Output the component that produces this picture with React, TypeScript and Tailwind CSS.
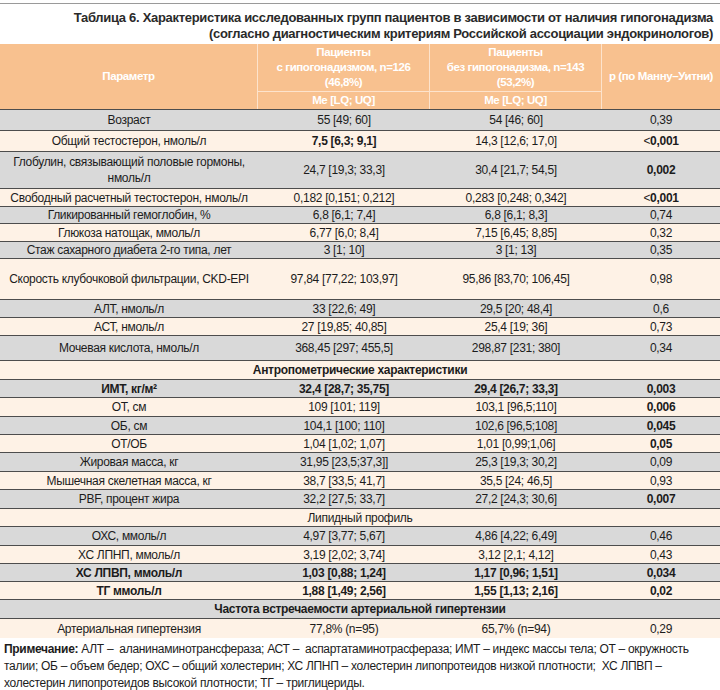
import React from 'react';

type Row = {
  label?: string;
  a?: string;
  b?: string;
  p?: string;
  h: number;
  bold?: boolean;
  aBold?: boolean;
  pBold?: boolean;
  lt?: boolean;
  section?: string;
  sectionBold?: boolean;
};

const rows: Row[] = [
  { label: 'Возраст', a: '55 [49; 60]', b: '54 [46; 60]', p: '0,39', h: 21 },
  { label: 'Общий тестостерон, нмоль/л', a: '7,5 [6,3; 9,1]', aBold: true, b: '14,3 [12,6; 17,0]', p: '0,001', pBold: true, lt: true, h: 21 },
  { label: 'Глобулин, связывающий половые гормоны,\nнмоль/л', a: '24,7 [19,3; 33,3]', b: '30,4 [21,7; 54,5]', p: '0,002', pBold: true, h: 37 },
  { label: 'Свободный расчетный тестостерон, нмоль/л', a: '0,182 [0,151; 0,212]', b: '0,283 [0,248; 0,342]', p: '0,001', pBold: true, lt: true, h: 18 },
  { label: 'Гликированный гемоглобин, %', a: '6,8 [6,1; 7,4]', b: '6,8 [6,1; 8,3]', p: '0,74', h: 17 },
  { label: 'Глюкоза натощак, ммоль/л', a: '6,77 [6,0; 8,4]', b: '7,15 [6,45; 8,85]', p: '0,32', h: 18 },
  { label: 'Стаж сахарного диабета 2-го типа, лет', a: '3 [1; 10]', b: '3 [1; 13]', p: '0,35', h: 17 },
  { label: 'Скорость клубочковой фильтрации, CKD-EPI', a: '97,84 [77,22; 103,97]', b: '95,86 [83,70; 106,45]', p: '0,98', h: 41 },
  { label: 'АЛТ, нмоль/л', a: '33 [22,6; 49]', b: '29,5 [20; 48,4]', p: '0,6', h: 18 },
  { label: 'АСТ, нмоль/л', a: '27 [19,85; 40,85]', b: '25,4 [19; 36]', p: '0,73', h: 18 },
  { label: 'Мочевая кислота, нмоль/л', a: '368,45 [297; 455,5]', b: '298,87 [231; 380]', p: '0,34', h: 25 },
  { section: 'Антропометрические характеристики', sectionBold: true, h: 19 },
  { label: 'ИМТ, кг/м²', a: '32,4 [28,7; 35,75]', b: '29,4 [26,7; 33,3]', p: '0,003', bold: true, h: 18 },
  { label: 'ОТ, см', a: '109 [101; 119]', b: '103,1 [96,5;110]', p: '0,006', pBold: true, h: 19 },
  { label: 'ОБ, см', a: '104,1 [100; 110]', b: '102,6 [96,5;108]', p: '0,045', pBold: true, h: 18 },
  { label: 'ОТ/ОБ', a: '1,04 [1,02; 1,07]', b: '1,01 [0,99;1,06]', p: '0,05', pBold: true, h: 18 },
  { label: 'Жировая масса, кг', a: '31,95 [23,5;37,3]]', b: '25,3 [19,3; 30,2]', p: '0,09', h: 19 },
  { label: 'Мышечная скелетная масса, кг', a: '38,7 [33,5; 41,7]', b: '35,5 [24; 46,5]', p: '0,93', h: 18 },
  { label: 'PBF, процент жира', a: '32,2 [27,5; 33,7]', b: '27,2 [24,3; 30,6]', p: '0,007', pBold: true, h: 19 },
  { section: 'Липидный профиль', h: 18 },
  { label: 'ОХС, ммоль/л', a: '4,97 [3,77; 5,67]', b: '4,86 [4,22; 6,49]', p: '0,46', h: 19 },
  { label: 'ХС ЛПНП, ммоль/л', a: '3,19 [2,02; 3,74]', b: '3,12 [2,1; 4,12]', p: '0,43', h: 18 },
  { label: 'ХС ЛПВП, ммоль/л', a: '1,03 [0,88; 1,24]', b: '1,17 [0,96; 1,51]', p: '0,034', bold: true, h: 18 },
  { label: 'ТГ ммоль/л', a: '1,88 [1,49; 2,56]', b: '1,55 [1,13; 2,16]', p: '0,02', bold: true, h: 18 },
  { section: 'Частота встречаемости артериальной гипертензии', sectionBold: true, h: 19 },
  { label: 'Артериальная гипертензия', a: '77,8% (n=95)', b: '65,7% (n=94)', p: '0,29', h: 19 },
];

const App: React.FC = () => {
  return (
    <div className="w-[720px] h-[690px] bg-white text-[#1c1c1c] font-['Liberation_Sans',Arial,sans-serif] overflow-hidden">
      {/* Title */}
      <div className="mt-[3px] border-t border-[#9a9a9a] pt-[6px] pb-[2px] pr-[7px] text-right text-[13px] leading-[16px] font-bold tracking-[-0.3px] text-[#2a2a2a] whitespace-nowrap">
        <div>Таблица 6. Характеристика исследованных групп пациентов в зависимости от наличия гипогонадизма</div>
        <div>(согласно диагностическим критериям Российской ассоциации эндокринологов)</div>
      </div>

      {/* Header */}
      <div className="grid grid-cols-[258px_172px_172px_118px] h-[66px] bg-[#f8c18f] text-white font-bold text-[11.5px] leading-[15px] tracking-[-0.4px] border-b border-[#4d4d4d] whitespace-nowrap">
        <div className="flex items-center justify-center border-r border-[#fde3cc]">Параметр</div>
        <div className="flex flex-col border-r border-[#fde3cc]">
          <div className="h-[48px] flex flex-col items-center justify-center border-b border-[#fde3cc] text-center">
            <span>Пациенты</span>
            <span>с гипогонадизмом, n=126</span>
            <span>(46,8%)</span>
          </div>
          <div className="flex-1 flex items-center justify-center">Me [LQ; UQ]</div>
        </div>
        <div className="flex flex-col border-r border-[#fde3cc]">
          <div className="h-[48px] flex flex-col items-center justify-center border-b border-[#fde3cc] text-center">
            <span>Пациенты</span>
            <span>без гипогонадизма, n=143</span>
            <span>(53,2%)</span>
          </div>
          <div className="flex-1 flex items-center justify-center">Me [LQ; UQ]</div>
        </div>
        <div className="flex items-center justify-center">р (по Манну–Уитни)</div>
      </div>

      {/* Body */}
      <div className="text-[12px] leading-[16px] tracking-[-0.3px]">
        {rows.map((r, i) => {
          const bg = i % 2 === 0 ? 'bg-[#d9d9d9]' : 'bg-[#fef2e6]';
          const last = i === rows.length - 1;
          if (r.section) {
            return (
              <div
                key={i}
                className={`${bg} flex items-center justify-center whitespace-nowrap ${last ? '' : 'border-b border-[#4d4d4d]'} ${r.sectionBold ? 'font-bold' : ''}`}
                style={{ height: r.h }}
              >
                {r.section}
              </div>
            );
          }
          return (
            <div
              key={i}
              className={`${bg} grid grid-cols-[258px_172px_172px_118px] whitespace-nowrap ${last ? '' : 'border-b border-[#4d4d4d]'} ${r.bold ? 'font-bold' : ''}`}
              style={{ height: r.h }}
            >
              <div className="flex items-center justify-center text-center whitespace-pre">{r.label}</div>
              <div className={`flex items-center justify-center ${r.aBold ? 'font-bold' : ''}`}>{r.a}</div>
              <div className="flex items-center justify-center">{r.b}</div>
              <div className="flex items-center justify-center">
                {r.lt && <span className="font-normal">&lt;</span>}
                <span className={r.pBold ? 'font-bold' : ''}>{r.p}</span>
              </div>
            </div>
          );
        })}
      </div>

      {/* Note */}
      <div className="pt-[3px] pl-[4px] pb-[2px] text-[12px] leading-[17px] tracking-[-0.3px] border-b border-[#6b6b6b] whitespace-nowrap">
        <div>
          <span className="font-bold">Примечание:</span> АЛТ –&nbsp; аланинаминотрансфераза; АСТ –&nbsp; аспартатаминотрасфераза; ИМТ – индекс массы тела; ОТ – окружность
        </div>
        <div>талии; ОБ – объем бедер; ОХС – общий холестерин; ХС ЛПНП – холестерин липопротеидов низкой плотности;&nbsp; ХС ЛПВП –</div>
        <div>холестерин липопротеидов высокой плотности; ТГ – триглицериды.</div>
      </div>
    </div>
  );
};

export default App;
